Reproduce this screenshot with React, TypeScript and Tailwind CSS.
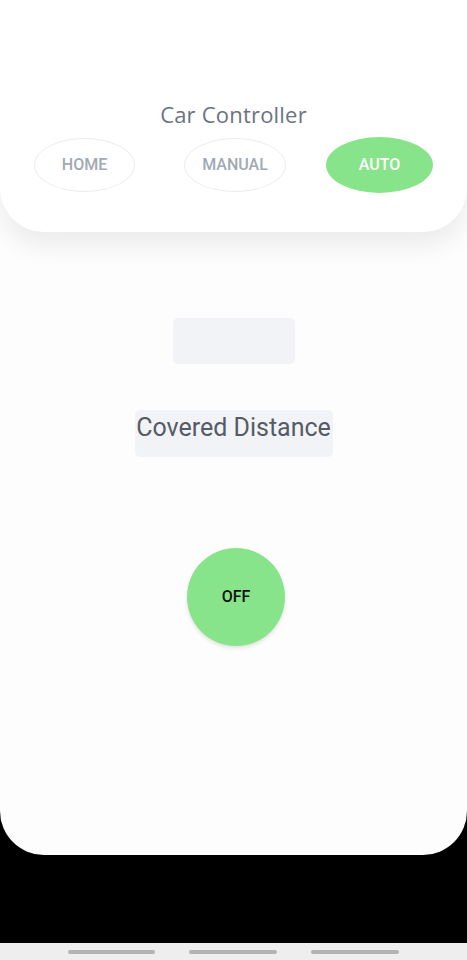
export default function App() {
  return (
    <div className="w-[467px] h-[960px] bg-black flex flex-col overflow-hidden" style={{ fontFamily: "Roboto, 'Liberation Sans', sans-serif" }}>
      <div className="h-[855px] bg-[#fdfdfd] rounded-b-[44px] flex flex-col items-center">
        <div className="w-full h-[232px] bg-white rounded-b-[44px] shadow-[0_14px_24px_rgba(0,0,0,0.07)] flex flex-col items-center pt-[99px]">
          <div className="text-[22px] leading-[30px] text-[#6b7280] font-['Open_Sans',sans-serif] tracking-[0.2px]">Car Controller</div>
          <div className="w-full flex items-center pl-[34px] pr-[34px] mt-[8px]">
            <div className="w-[101px] h-[54px] rounded-[50%] border border-[#ececec] flex items-center justify-center text-[16px] font-medium text-[#a0a9b4]">HOME</div>
            <div className="w-[102px] h-[54px] rounded-[50%] border border-[#ececec] flex items-center justify-center text-[16px] font-medium text-[#a0a9b4] ml-[49px]">MANUAL</div>
            <div className="w-[107px] h-[56px] rounded-[50%] bg-[#88e48a] flex items-center justify-center text-[16px] font-medium text-white ml-[40px]">AUTO</div>
          </div>
        </div>
        <div className="mt-[86px] w-[122px] h-[46px] bg-[#f2f3f7] rounded-[5px]"></div>
        <div className="mt-[46px] w-[198px] h-[47px] bg-[#f2f3f7] rounded-[5px] flex items-start justify-center pt-[2px] text-[25px] leading-[32px] text-[#555b65]">Covered Distance</div>
        <div className="mt-[91px] ml-[5px] w-[98px] h-[98px] rounded-full bg-[#88e48a] shadow-[0_2px_4px_rgba(0,0,0,0.12)] flex items-center justify-center text-[16px] font-medium text-[#111]">OFF</div>
      </div>
      <div className="flex-1"></div>
      <div className="h-[17px] bg-[#eeeeee] flex items-center">
        <div className="ml-[68px] w-[87px] h-[4px] rounded-full bg-[#b3b3b3]"></div>
        <div className="ml-[34px] w-[88px] h-[4px] rounded-full bg-[#b3b3b3]"></div>
        <div className="ml-[34px] w-[88px] h-[4px] rounded-full bg-[#b3b3b3]"></div>
      </div>
    </div>
  );
}
